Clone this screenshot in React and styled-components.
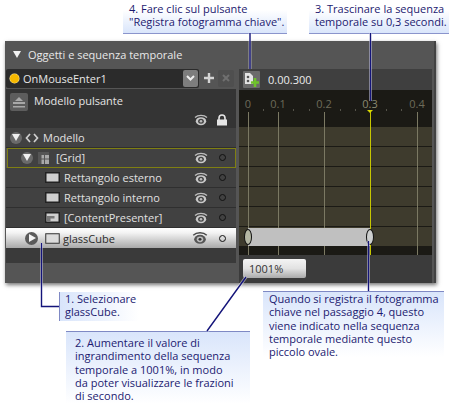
import * as React from 'react'
import styled, { createGlobalStyle } from 'styled-components'

const Global = createGlobalStyle`
html, body {
  margin: 0;
  padding: 0;
  background: #fff;
}
* {
  box-sizing: border-box;
}
`

const Canvas = styled.div`
position: relative;
width: 452px;
height: 404px;
overflow: hidden;
background: #fff;
font-family: "Open Sans", "Noto Sans", sans-serif;
font-size: 11px;
`

const Panel = styled.div`
margin: 41px 0 0 5px;
width: 431px;
height: 242px;
background: #555;
border-right: 2px solid #424242;
box-shadow: 1px 2px 4px rgba(0, 0, 0, 0.55);
display: flex;
flex-direction: column;
color: #e2e2e2;
`

const TitleBar = styled.div`
height: 26px;
flex: none;
display: flex;
align-items: center;
gap: 7px;
padding-left: 8px;
color: #e8e8e8;
`

const DownTriangle = styled.span`
width: 0;
height: 0;
border-left: 4px solid transparent;
border-right: 4px solid transparent;
border-top: 7px solid ${p => p.$color || '#f2f2f2'};
`

const RightTriangle = styled.span`
width: 0;
height: 0;
margin-left: 2px;
border-top: 4px solid transparent;
border-bottom: 4px solid transparent;
border-left: 7px solid #f2f2f2;
`

const Body = styled.div`
flex: 1;
display: flex;
padding-left: 1px;
gap: 3px;
`

const LeftPane = styled.div`
width: 230px;
display: flex;
flex-direction: column;
`

const ComboRow = styled.div`
height: 20px;
margin-top: 1px;
display: flex;
align-items: center;
`

const Combo = styled.div`
width: 193px;
height: 19px;
background: #2b2b2b;
border-radius: 2px;
display: flex;
align-items: center;
padding: 0 1px 0 4px;
gap: 4px;
color: #e6e6e6;
`

const Dot = styled.span`
width: 9px;
height: 9px;
border-radius: 50%;
background: #f7b900;
box-shadow: 0 0 0 0.5px #ffe9a0;
`

const Chevron = styled.span`
margin-left: auto;
width: 15px;
height: 17px;
border-radius: 2px;
background: #7d7d7d;
display: flex;
align-items: center;
justify-content: center;
`

const SmallBtn = styled.span`
width: 16px;
height: 17px;
margin-left: ${p => p.$gap || 0}px;
border-radius: 2px;
background: ${p => p.$bg || 'transparent'};
display: flex;
align-items: center;
justify-content: center;
`

const TemplateRow = styled.div`
height: 39px;
margin-top: 1px;
background: #343434;
display: grid;
grid-template-columns: 18px 1fr;
column-gap: 6px;
padding: 4px 0 0 4px;
`

const TemplateBtn = styled.span`
width: 18px;
height: 18px;
border-radius: 2px;
background: #5d5d5d;
display: flex;
align-items: center;
justify-content: center;
`

const TemplateActions = styled.div`
grid-column: 2;
display: flex;
justify-content: flex-end;
align-items: center;
gap: 7px;
padding-right: 8px;
margin-top: -1px;
`

const TemplateLabel = styled.span`
line-height: 16px;
color: #e4e4e4;
`

const Row = styled.div`
height: 20px;
display: flex;
align-items: center;
padding-left: ${p => p.$indent}px;
padding-right: 10px;
background: ${p => (p.$selected ? 'linear-gradient(#ffffff, #f2f2f2 25%, #a9a9a9)' : '#414141')};
color: ${p => (p.$selected ? '#2a2a2a' : '#e0e0e0')};
border-bottom: ${p => (p.$selected ? 'none' : '1px solid #2f2f2f')};
${p => p.$active && `
  outline: 1px solid #7f7f12;
  outline-offset: -1px;
  margin: 0 0 0 1px;
  padding-left: ${p.$indent - 1}px;
`}
`

const Disclosure = styled.span`
width: ${p => p.$size || 12}px;
height: ${p => p.$size || 12}px;
flex: none;
border-radius: 50%;
background: ${p => (p.$dark ? '#5a5a5a' : '#6a6a6a')};
display: flex;
align-items: center;
justify-content: center;
margin-right: ${p => p.$gap}px;
`

const RowLabel = styled.span`
margin-left: ${p => p.$gap || 0}px;
white-space: nowrap;
`

const RowEnd = styled.span`
margin-left: auto;
display: flex;
align-items: center;
gap: 10px;
`

const Ring = styled.span`
width: 7px;
height: 7px;
border-radius: 50%;
border: 1px solid #111;
`

const LeftFill = styled.div`
height: 15px;
background: #3a3a3a;
`

const RightPane = styled.div`
width: 193px;
margin-top: 2px;
display: flex;
flex-direction: column;
`

const TimeHeader = styled.div`
height: 21px;
flex: none;
background: #3f3f3f;
display: flex;
align-items: center;
gap: 8px;
padding-left: 4px;
color: #ececec;
`

const RecordBtn = styled.span`
width: 17px;
height: 17px;
background: #6b6b6b;
border-radius: 1px;
display: flex;
`

const Timeline = styled.div`
position: relative;
height: 165px;
flex: none;
background: #1b1a15;
`

const Ruler = styled.div`
height: 37px;
`

const Track = styled.div`
height: 20px;
background: #3e3b2d;
border-bottom: 1px solid #1b1a15;
`

const GridLine = styled.span`
position: absolute;
top: 22px;
bottom: 0;
left: ${p => p.$x}px;
width: 1px;
background: ${p => (p.$current ? '#c6c600' : '#7b7963')};
`

const RulerLabel = styled.span`
position: absolute;
top: 7px;
left: ${p => p.$x}px;
transform: translateX(-50%);
color: ${p => (p.$current ? '#8a8870' : '#6d6b5a')};
line-height: 14px;
`

const Tick = styled.span`
position: absolute;
top: 19px;
left: ${p => p.$x}px;
width: 1px;
height: 2px;
background: #55534a;
`

const Playhead = styled.span`
position: absolute;
top: 20px;
left: 128px;
width: 0;
height: 0;
border-left: 3px solid transparent;
border-right: 3px solid transparent;
border-top: 3px solid #d8d800;
`

// keyframe span of glassCube, drawn over the grid lines
const KeyLayer = styled.div`
position: absolute;
left: 0;
right: 0;
top: 137px;
height: 20px;
`

const KeyBar = styled.div`
position: absolute;
top: 1px;
left: 9px;
width: 122px;
height: 18px;
background: #c0c0c0;
`

const KeyFrame = styled.span`
position: absolute;
top: 2px;
left: ${p => p.$x}px;
width: 8px;
height: 16px;
border-radius: 50%;
border: 1px solid #111;
background: ${p => p.$fill};
`

const TimeFooter = styled.div`
flex: 1;
background: #3b3b3b;
padding: 4px 0 0 4px;
`

const ZoomBtn = styled.div`
width: 63px;
height: 19px;
border-radius: 2px;
background: linear-gradient(#f4f4f4, #e2e2e2 50%, #aaa);
color: #333;
padding-left: 6px;
line-height: 19px;
`

// the blue notes that sit on top of the screenshot
const Note = styled.div`
position: absolute;
left: ${p => p.$x}px;
top: ${p => p.$y}px;
width: ${p => p.$w}px;
height: ${p => p.$h}px;
padding: ${p => p.$pad};
color: #1c1a70;
line-height: 13.3px;
white-space: nowrap;
`

const NoteDown = styled(Note)`
background: linear-gradient(#ffffff, #ffffff 30%, #d9e5fb);
border-bottom: 1px solid #8a94cc;
`

const NoteUp = styled(Note)`
background: linear-gradient(#d9e5fb, #ffffff);
border-top: 1px solid #7f89c4;
`

const NoteSide = styled(Note)`
background: linear-gradient(to right, #d9e5fb, #ffffff);
border-left: 1px solid #7f89c4;
`

const Leaders = styled.svg`
position: absolute;
left: 0;
top: 0;
z-index: 2;
pointer-events: none;
`

const Eye = ({ big }) => (
  <svg width={big ? 18 : 16} height={big ? 16 : 14} viewBox="0 0 16 14">
    <path d="M2 4.5C5 1.6 11 1.6 14 4.5" fill="none" stroke={big ? '#4a4a4a' : '#bdbdbd'} strokeWidth="1.3" />
    <ellipse cx="8" cy="8.2" rx="5.2" ry="4" fill={big ? '#555' : '#c8c8c8'} />
    <ellipse cx="8" cy="8.2" rx="2.9" ry="2.5" fill={big ? '#bbb' : '#454545'} />
    <circle cx="8" cy="8.2" r="1.3" fill={big ? '#333' : '#bbb'} />
  </svg>
)

const Lock = () => (
  <svg width="12" height="12" viewBox="0 0 12 12">
    <path d="M3 6V4a3 3 0 0 1 6 0v2" fill="none" stroke="#e6e6e6" strokeWidth="1.6" />
    <rect x="1" y="5.5" width="10" height="6" fill="#e6e6e6" />
  </svg>
)

const ElementIcon = ({ dark, presenter }) => (
  <svg width="15" height="11" viewBox="0 0 15 11">
    <rect
      x="0.75"
      y="0.75"
      width="13.5"
      height="9.5"
      fill={dark ? '#dcdcdc' : '#cfcfcf'}
      stroke={dark ? '#333' : '#222'}
      strokeWidth={dark ? 1 : 1.5}
    />
    {presenter && <path d="M1.5 9.5V4h8v2.5H5.5v3z" fill="#777" />}
  </svg>
)

const GridIcon = () => (
  <svg width="11" height="12" viewBox="0 0 11 12">
    <rect width="11" height="12" fill="#555" />
    <rect x="3" y="3" width="8" height="9" fill="#a9a9a9" />
    <path d="M6.5 3v9M3 7h8M3 0v12" stroke="#555" />
  </svg>
)

const rows = [
  { label: 'Rettangolo esterno' },
  { label: 'Rettangolo interno' },
  { label: '[ContentPresenter]', presenter: true },
]

const labels = [
  { text: '0', x: 9 },
  { text: '0.1', x: 39 },
  { text: '0.2', x: 85 },
  { text: '0.3', x: 131, current: true },
  { text: '0.4', x: 178 },
]

const ticks = [24, 54, 70, 101, 116, 147, 162]

const leaders = 'M250 33V69M370.5 33V101M41.5 243V306.5H59M246 277L207 331M368.5 241V291'

const App = () => {
  return (
    <Canvas>
      <Global />
      <Panel>
        <TitleBar>
          <DownTriangle />
          Oggetti e sequenza temporale
        </TitleBar>
        <Body>
          <LeftPane>
            <ComboRow>
              <Combo>
                <Dot />
                OnMouseEnter1
                <Chevron>
                  <svg width="9" height="6" viewBox="0 0 9 6">
                    <path d="M1 1l3.5 3.5L8 1" fill="none" stroke="#eee" strokeWidth="2" />
                  </svg>
                </Chevron>
              </Combo>
              <SmallBtn $gap={2}>
                <svg width="10" height="10" viewBox="0 0 10 10">
                  <path d="M5 0v10M0 5h10" stroke="#d4d4d4" strokeWidth="2.4" />
                </svg>
              </SmallBtn>
              <SmallBtn $gap={1} $bg="#4f4f4f">
                <svg width="8" height="8" viewBox="0 0 8 8">
                  <path d="M1 1l6 6M7 1L1 7" stroke="#6f6f6f" strokeWidth="2" />
                </svg>
              </SmallBtn>
            </ComboRow>
            <TemplateRow>
              <TemplateBtn>
                <svg width="14" height="12" viewBox="0 0 14 12">
                  <path d="M7 1l4 4H3z" fill="#a8a8a8" />
                  <rect x="1" y="6" width="12" height="2" fill="#a8a8a8" />
                  <rect x="1" y="10" width="12" height="1.5" fill="#a8a8a8" />
                </svg>
              </TemplateBtn>
              <TemplateLabel>Modello pulsante</TemplateLabel>
              <TemplateActions>
                <Eye />
                <Lock />
              </TemplateActions>
            </TemplateRow>
            <Row $indent={4}>
              <Disclosure $gap={3}>
                <DownTriangle $color="#f0f0f0" />
              </Disclosure>
              <svg width="14" height="10" viewBox="0 0 14 10">
                <path d="M5 1L1.5 5 5 9M9 1l3.5 4L9 9" fill="none" stroke="#cfcfcf" strokeWidth="1.7" />
              </svg>
              <RowLabel $gap={4}>Modello</RowLabel>
            </Row>
            <Row $indent={15} $active>
              <Disclosure $gap={5}>
                <DownTriangle $color="#f0f0f0" />
              </Disclosure>
              <GridIcon />
              <RowLabel $gap={7}>[Grid]</RowLabel>
              <RowEnd>
                <Eye />
                <Ring />
              </RowEnd>
            </Row>
            {rows.map(r => (
              <Row key={r.label} $indent={39}>
                <ElementIcon presenter={r.presenter} />
                <RowLabel $gap={4}>{r.label}</RowLabel>
                <RowEnd>
                  <Eye />
                  <Ring />
                </RowEnd>
              </Row>
            ))}
            <Row $indent={19} $selected>
              <Disclosure $size={13} $gap={7} $dark>
                <RightTriangle />
              </Disclosure>
              <ElementIcon dark />
              <RowLabel $gap={3}>glassCube</RowLabel>
              <RowEnd>
                <Eye big />
                <Ring />
              </RowEnd>
            </Row>
            <LeftFill />
          </LeftPane>
          <RightPane>
            <TimeHeader>
              <RecordBtn>
                <svg width="17" height="17" viewBox="0 0 17 17">
                  <path d="M2 2h5l3 3v8H2z" fill="#e4e4e4" />
                  <circle cx="5" cy="6" r="1.3" fill="#555" />
                  <circle cx="5" cy="10" r="1.3" fill="#555" />
                  <path d="M12 7v9M8 11.5h8" stroke="#6fc32b" strokeWidth="2.6" />
                </svg>
              </RecordBtn>
              0.00.300
            </TimeHeader>
            <Timeline>
              <Ruler />
              <Track />
              <Track />
              <Track />
              <Track />
              <Track />
              <Track />
              {labels.map(l => (
                <React.Fragment key={l.text}>
                  <RulerLabel $x={l.x} $current={l.current}>{l.text}</RulerLabel>
                  <GridLine $x={l.x} $current={l.current} />
                </React.Fragment>
              ))}
              {ticks.map(t => <Tick key={t} $x={t} />)}
              <Playhead />
              <KeyLayer>
                <KeyBar />
                <KeyFrame $x={5} $fill="#b4b7a4" />
                <KeyFrame $x={127} $fill="#cdcfcf" />
              </KeyLayer>
            </Timeline>
            <TimeFooter>
              <ZoomBtn>1001%</ZoomBtn>
            </TimeFooter>
          </RightPane>
        </Body>
      </Panel>

      <Leaders width="452" height="404" viewBox="0 0 452 404">
        <path d={leaders} fill="none" stroke="#fff" strokeWidth="3" opacity="0.5" />
        <path d={leaders} fill="none" stroke="#14147a" strokeWidth="1.4" />
      </Leaders>

      <NoteDown $x={123} $y={0} $w={164} $h={34} $pad="2px 0 0 6px">
        4. Fare clic sul pulsante<br />"Registra fotogramma chiave".
      </NoteDown>
      <NoteDown $x={309} $y={0} $w={140} $h={34} $pad="2px 0 0 6px">
        3. Trascinare la sequenza<br />temporale su 0,3 secondi.
      </NoteDown>
      <NoteSide $x={59} $y={292} $w={80} $h={29} $pad="0 0 0 5px">
        1. Selezionare<br />glassCube.
      </NoteSide>
      <NoteUp $x={66} $y={331} $w={184} $h={73} $pad="4px 0 0 9px">
        2. Aumentare il valore di<br />
        ingrandimento della sequenza<br />
        temporale a 1001%, in modo<br />
        da poter visualizzare le frazioni<br />
        di secondo.
      </NoteUp>
      <NoteUp $x={263} $y={291} $w={181} $h={66} $pad="0 0 0 6px">
        Quando si registra il fotogramma<br />
        chiave nel passaggio 4, questo<br />
        viene indicato nella sequenza<br />
        temporale mediante questo<br />
        piccolo ovale.
      </NoteUp>
    </Canvas>
  )
}

export default App
